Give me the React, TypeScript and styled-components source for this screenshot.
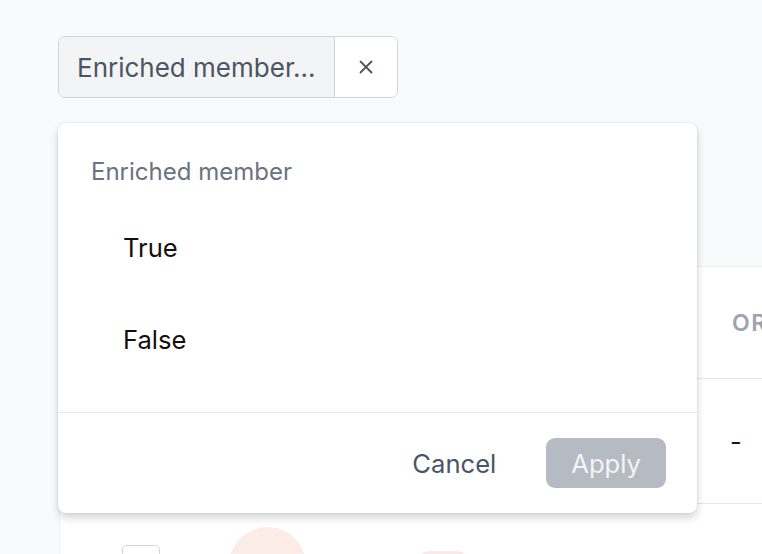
import React from "react";
import styled, { createGlobalStyle } from "styled-components";

const Global = createGlobalStyle`
  html, body { margin: 0; padding: 0; }
  body {
    background: #f9fafb;
    font-family: Inter, "Noto Sans", "Liberation Sans", sans-serif;
    width: 762px;
    height: 554px;
    overflow: hidden;
  }
  * { box-sizing: border-box; }
`;

const Page = styled.div`
  position: relative;
  padding: 36px 0 0 58px;
  height: 554px;
  overflow: hidden;
`;

const Chip = styled.div`
  display: inline-flex;
  height: 62px;
  border: 1.5px solid #d1d5db;
  border-radius: 7px;
  overflow: hidden;
  background: #fff;
`;

const ChipLabel = styled.div`
  display: flex;
  align-items: center;
  padding: 0 18px 0 18px;
  background: #f3f4f6;
  color: #4b5563;
  font-size: 26px;
  border-right: 1.5px solid #d1d5db;
  white-space: nowrap;
`;

const ChipClose = styled.button`
  width: 62px;
  border: none;
  background: #fff;
  display: flex;
  align-items: center;
  justify-content: center;
  padding: 0;
  color: #4b5563;
`;

const TableCard = styled.div`
  margin-top: 168px;
  margin-left: 1px;
  background: #fff;
  border: 1px solid #eef0f3;
  border-right: none;
  border-radius: 8px 0 0 0;
  width: 720px;
`;

const Row = styled.div<{ $h: number }>`
  display: grid;
  grid-template-columns: 62px 107px 185px 316px 1fr;
  align-items: center;
  height: ${(p) => p.$h}px;
  border-bottom: 1px solid #e5e7eb;
`;

const HeadCell = styled.div`
  font-size: 23px;
  font-weight: 600;
  letter-spacing: 1.5px;
  color: #9ca3af;
  text-transform: uppercase;
  white-space: nowrap;
  padding-left: 2px;
`;

const Cell = styled.div`
  font-size: 25.6px;
  color: #111827;
  white-space: nowrap;
`;

const Checkbox = styled.div`
  width: 38px;
  height: 38px;
  margin-top: -4px;
  border: 1.5px solid #d1d5db;
  border-radius: 5px;
  background: #fff;
`;

const Avatar = styled.div`
  width: 77px;
  height: 77px;
  border-radius: 50%;
  background: #fbece8;
`;

const Pill = styled.div`
  width: 58px;
  height: 34px;
  margin-top: 4px;
  border-radius: 17px;
  background: #fce8e8;
`;

const Dropdown = styled.div`
  position: absolute;
  left: 58px;
  top: 123px;
  width: 639px;
  height: 390px;
  background: #fff;
  border-radius: 8px;
  box-shadow: 0 5px 8px rgba(0, 0, 0, 0.16), 0 0 3px rgba(0, 0, 0, 0.1);
  display: flex;
  flex-direction: column;
`;

const Body = styled.div`
  padding: 33px 0 28px 0;
  border-bottom: 1.5px solid #e5e7eb;
  height: 290px;
`;

const Title = styled.div`
  padding-left: 33px;
  font-size: 24px;
  line-height: 32px;
  color: #6b7280;
`;

const Options = styled.div`
  margin-top: 13px;
  display: flex;
  flex-direction: column;
`;

const Option = styled.div`
  height: 92px;
  display: flex;
  align-items: center;
  padding-left: 65px;
  font-size: 25.6px;
  color: #140f0f;
`;

const Footer = styled.div`
  flex: 1;
  display: flex;
  align-items: center;
  justify-content: flex-end;
  padding-right: 31px;
  gap: 25px;
`;

const Button = styled.button<{ $primary?: boolean }>`
  height: 50px;
  padding: 0 25px;
  border: none;
  border-radius: 9px;
  font-family: inherit;
  font-size: 25.6px;
  background: ${(p) => (p.$primary ? "#b6bac2" : "transparent")};
  color: ${(p) => (p.$primary ? "#f3f4f6" : "#4b5563")};
`;

export default function App() {
  return (
    <>
      <Global />
      <Page>
        <Chip>
          <ChipLabel>Enriched member...</ChipLabel>
          <ChipClose aria-label="Remove">
            <svg width="16" height="16" viewBox="0 0 16 16" fill="none">
              <path d="M2.5 2.5l11 11M13.5 2.5l-11 11" stroke="#4b5563" strokeWidth="1.8" strokeLinecap="round" />
            </svg>
          </ChipClose>
        </Chip>
        <TableCard>
          <Row $h={112}>
            <div />
            <div />
            <HeadCell>Name</HeadCell>
            <HeadCell>Email</HeadCell>
            <HeadCell>Organization</HeadCell>
          </Row>
          <Row $h={125}>
            <div />
            <div />
            <div />
            <div />
            <Cell>-</Cell>
          </Row>
          <Row $h={124}>
            <div />
            <Checkbox />
            <Avatar />
            <Pill />
            <div />
          </Row>
        </TableCard>
        <Dropdown>
          <Body>
            <Title>Enriched member</Title>
            <Options>
              <Option>True</Option>
              <Option>False</Option>
            </Options>
          </Body>
          <Footer>
            <Button>Cancel</Button>
            <Button $primary disabled>Apply</Button>
          </Footer>
        </Dropdown>
      </Page>
    </>
  );
}
